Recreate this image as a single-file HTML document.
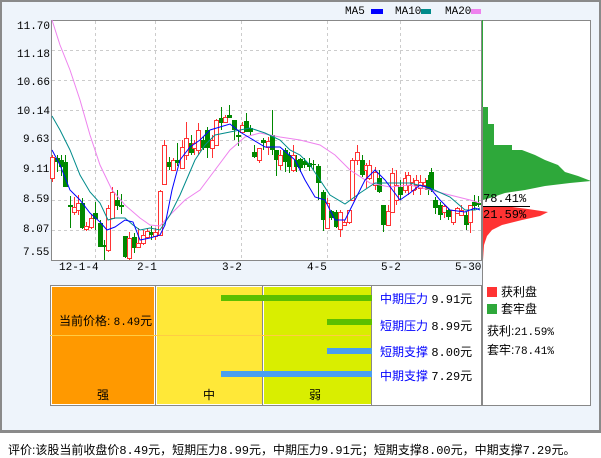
<!DOCTYPE html>
<html><head><meta charset="utf-8"><style>
body{margin:0;width:601px;height:456px;background:#fff;position:relative;font-family:"Liberation Sans","WenQuanYi Zen Hei",sans-serif;font-size:12px;overflow:hidden}
.a{position:absolute}
#frame{left:0;top:0;width:597px;height:428px;background:#eef4fb;border:2px solid #8a8a8a;border-bottom-width:3px}
.t{position:absolute;white-space:nowrap;line-height:14px}
.mono{font-family:"Liberation Mono","WenQuanYi Zen Hei",monospace;font-size:12px}
.ax{font-family:"Liberation Mono",monospace;font-size:11px}
</style></head><body>
<div class="a" id="frame"></div>
<svg class="a" style="left:0;top:0" width="601" height="456" xmlns="http://www.w3.org/2000/svg">
<rect x="51.5" y="20.5" width="430" height="240" fill="#fff" stroke="#888"/>
<rect x="482.5" y="20.5" width="108" height="385" fill="#fff" stroke="#888"/>
<g stroke="#ccc" stroke-dasharray="3,3" stroke-width="1">
<line x1="52" y1="50.5" x2="481" y2="50.5"/><line x1="52" y1="80.5" x2="481" y2="80.5"/><line x1="52" y1="110.5" x2="481" y2="110.5"/><line x1="52" y1="140.5" x2="481" y2="140.5"/><line x1="52" y1="170.5" x2="481" y2="170.5"/><line x1="52" y1="200.5" x2="481" y2="200.5"/><line x1="52" y1="230.5" x2="481" y2="230.5"/>
<line x1="95.5" y1="21" x2="95.5" y2="260"/><line x1="155.5" y1="21" x2="155.5" y2="260"/><line x1="241.5" y1="21" x2="241.5" y2="260"/><line x1="327.5" y1="21" x2="327.5" y2="260"/><line x1="400.5" y1="21" x2="400.5" y2="260"/>
</g>
<g id="cd"></g>
<polyline fill="none" stroke="#ee82ee" points="52,20 60,45 70,70 80,100 90,135 100,165 112,190 125,205 140,218 150,225 160,226 170,215 185,200 200,190 215,170 230,150 245,137 260,133 280,137 300,140 320,145 335,155 350,170 370,183 390,187 410,185 430,190 450,195 470,200 480,203"/>
<polyline fill="none" stroke="#008b8b" points="52,116 60,130 70,150 80,175 90,192 100,203 108,220 115,218 125,218 133,225 140,230 150,228 160,230 170,215 180,195 195,160 205,145 215,135 230,132 250,128 265,133 280,140 290,150 300,155 310,165 320,180 330,195 345,204 360,193 375,183 390,183 410,183 430,188 450,197 465,210 475,210 480,208"/>
<polyline fill="none" stroke="#0000ff" points="52,150 60,165 70,190 80,200 90,213 100,222 107,230 115,227 125,220 133,222 140,240 150,238 160,235 165,225 172,190 180,160 190,147 200,140 210,130 220,127 230,124 240,132 250,138 265,147 280,147 295,160 305,180 315,197 325,200 335,220 345,220 355,200 365,180 375,170 385,180 400,200 410,193 420,185 430,188 440,200 450,210 465,212 475,208 480,210"/>
<line x1="482.5" y1="20" x2="482.5" y2="107" stroke="#2ea83a"/>
<polygon fill="#2ea83a" points="483,107 488,107 488,124 494,124 494,145 512,145 512,150 522,150 535,155 545,160 558,165 565,172 578,176 591,181 570,183 545,186 525,190 505,193 490,198 483,200"/>
<polygon fill="#ff3333" points="483,207 512,207 528,209 548,212 540,216 522,220 502,225 492,230 487,236 484,245 483,260"/>
<line x1="483" y1="206.5" x2="530" y2="206.5" stroke="#000"/>
<rect x="50.5" y="285.5" width="431" height="120" fill="#fff" stroke="#888"/>
<rect x="52" y="287" width="102" height="117" fill="#ff9900"/>
<rect x="157" y="287" width="105" height="117" fill="#ffe838"/>
<rect x="264" y="287" width="107" height="117" fill="#d9ee00"/>
<line x1="155.5" y1="286" x2="155.5" y2="405" stroke="#888"/><line x1="262.5" y1="286" x2="262.5" y2="405" stroke="#888"/><line x1="371.5" y1="286" x2="371.5" y2="405" stroke="#888"/>
<line x1="50" y1="335.5" x2="370" y2="335.5" stroke="#ffcc44"/>
<rect x="221" y="295" width="151" height="6" fill="#5cbf00"/>
<rect x="327" y="319" width="45" height="6" fill="#5cbf00"/>
<rect x="327" y="348" width="45" height="6" fill="#4a9ef0"/>
<rect x="221" y="371" width="151" height="6" fill="#4a9ef0"/>
<rect x="371" y="9" width="12" height="5" fill="#0000ff"/><rect x="421" y="9" width="10" height="5" fill="#008b8b"/><rect x="471" y="9" width="10" height="5" fill="#ee82ee"/>
<rect x="487" y="287" width="10" height="10" fill="#ff3333"/><rect x="487" y="304" width="10" height="10" fill="#2ea83a"/>
</svg>
<div class="t ax" style="left:345px;top:5px">MA5</div>
<div class="t ax" style="left:395px;top:5px">MA10</div>
<div class="t ax" style="left:445px;top:5px">MA20</div>
<div class="t ax" style="left:17px;top:20px">11.70</div>
<div class="t ax" style="left:17px;top:48px">11.18</div>
<div class="t ax" style="left:17px;top:76px">10.66</div>
<div class="t ax" style="left:17px;top:105px">10.14</div>
<div class="t ax" style="left:23px;top:133px">9.63</div>
<div class="t ax" style="left:23px;top:163px">9.11</div>
<div class="t ax" style="left:23px;top:193px">8.59</div>
<div class="t ax" style="left:23px;top:223px">8.07</div>
<div class="t ax" style="left:23px;top:246px">7.55</div>
<div class="t ax" style="left:59px;top:261px">12-1-4</div>
<div class="t ax" style="left:137px;top:261px">2-1</div>
<div class="t ax" style="left:222px;top:261px">3-2</div>
<div class="t ax" style="left:307px;top:261px">4-5</div>
<div class="t ax" style="left:381px;top:261px">5-2</div>
<div class="t ax" style="left:455px;top:261px">5-30</div>
<div class="t mono" style="left:483px;top:192px">78.41%</div>
<div class="t mono" style="left:483px;top:208px">21.59%</div>
<div class="t" style="left:59px;top:314px">当前价格: <span class="ax">8.49</span>元</div>
<div class="t" style="left:97px;top:388px">强</div>
<div class="t" style="left:203px;top:388px">中</div>
<div class="t" style="left:309px;top:388px">弱</div>
<div class="t" style="left:380px;top:292px"><span style="color:#0000ff">中期压力</span> <span class="mono">9.91</span>元</div>
<div class="t" style="left:380px;top:319px"><span style="color:#0000ff">短期压力</span> <span class="mono">8.99</span>元</div>
<div class="t" style="left:380px;top:345px"><span style="color:#0000ff">短期支撑</span> <span class="mono">8.00</span>元</div>
<div class="t" style="left:380px;top:369px"><span style="color:#0000ff">中期支撑</span> <span class="mono">7.29</span>元</div>
<div class="t" style="left:501px;top:285px">获利盘</div>
<div class="t" style="left:501px;top:302px">套牢盘</div>
<div class="t" style="left:487px;top:324px">获利:<span class="ax">21.59%</span></div>
<div class="t" style="left:487px;top:343px">套牢:<span class="ax">78.41%</span></div>
<div class="t" style="left:8px;top:443px">评价:该股当前收盘价<span class="mono">8.49</span>元，短期压力<span class="mono">8.99</span>元，中期压力<span class="mono">9.91</span>元；短期支撑<span class="mono">8.00</span>元，中期支撑<span class="mono">7.29</span>元。</div>
<script>
var d=[[52,'r',157,178,155,182],[57,'g',158,162,155,172],[61,'g',160,167,155,176],[65,'g',162,187,155,187],[70,'g',205,207,196,228],[74,'r',207,212,197,215],[78,'r',203,210,195,215],[82,'g',203,228,198,229],[86,'r',226,229,222,231],[91,'r',218,227,214,229],[95,'g',213,219,202,230],[100,'g',223,247,220,247],[104,'g',245,247,240,260],[108,'r',208,250,205,252],[112,'r',192,218,187,218],[117,'g',200,206,190,210],[121,'g',205,207,194,214],[125,'g',236,257,236,258],[129,'r',238,258,232,260],[134,'g',237,248,233,253],[138,'r',243,247,228,247],[143,'r',235,243,230,245],[147,'r',231,237,228,238],[151,'g',232,235,226,240],[155,'r',232,236,228,240],[160,'r',191,235,190,235],[164,'r',145,184,140,184],[169,'g',162,167,157,170],[173,'r',160,170,158,170],[177,'g',160,163,143,166],[182,'r',147,168,140,168],[186,'r',138,155,122,160],[191,'g',143,153,135,155],[194,'r',143,148,140,155],[198,'r',130,150,123,155],[203,'g',140,148,137,150],[207,'g',130,148,127,158],[212,'r',140,148,135,158],[216,'r',120,145,119,145],[221,'g',118,123,107,130],[225,'r',117,122,115,122],[229,'g',115,118,105,118],[234,'g',120,130,120,140],[238,'g',135,137,130,146],[242,'r',125,132,122,132],[246,'g',121,132,113,132],[250,'g',128,132,125,135],[254,'g',152,157,145,158],[259,'r',148,160,148,163],[263,'g',140,143,138,150],[268,'r',141,147,137,155],[272,'g',135,150,110,155],[276,'g',150,160,150,176],[280,'r',155,165,150,170],[285,'g',150,162,148,172],[289,'g',155,167,152,173],[293,'r',155,170,145,172],[296,'g',160,167,155,172],[300,'g',159,168,158,172],[304,'g',161,165,158,168],[309,'g',163,167,158,171],[313,'g',164,165,160,170],[318,'g',166,183,164,200],[323,'g',192,220,190,231],[327,'r',203,228,198,228],[331,'g',211,218,210,220],[336,'g',212,227,210,228],[340,'r',212,229,210,237],[344,'r',222,225,220,225],[349,'r',210,222,210,224],[352,'r',160,200,158,200],[357,'r',152,160,145,165],[362,'g',160,175,155,177],[366,'r',165,170,163,188],[369,'r',165,178,160,180],[375,'r',172,185,167,190],[379,'g',178,192,170,193],[383,'g',205,225,205,232],[388,'r',211,225,205,225],[392,'r',173,212,168,212],[396,'r',185,200,170,205],[400,'g',187,195,180,200],[405,'r',178,190,172,193],[408,'r',175,185,172,195],[413,'r',182,190,178,195],[416,'r',180,185,175,190],[420,'r',182,188,175,195],[425,'r',182,185,178,190],[428,'g',180,190,175,195],[431,'g',172,190,168,192],[435,'g',200,208,197,214],[440,'g',205,215,202,220],[444,'r',206,212,205,218],[448,'g',210,217,208,220],[453,'r',210,222,210,225],[457,'r',208,213,207,214],[461,'r',210,215,205,216],[466,'g',215,225,212,230],[470,'r',205,222,205,233],[474,'g',202,206,195,210],[478,'g',203,205,196,207]];
var s='';d.forEach(function(c){var x=c[0],col=c[1]=='r'?'#ff3333':'#008800';
s+='<line x1="'+(x+.5)+'" y1="'+c[4]+'" x2="'+(x+.5)+'" y2="'+c[5]+'" stroke="'+col+'"/>';
var h=Math.max(1,c[3]-c[2]);
if(c[1]=='r')s+='<rect x="'+(x-1.5)+'" y="'+(c[2]+.5)+'" width="4" height="'+h+'" fill="#fff" stroke="'+col+'"/>';
else s+='<rect x="'+(x-2)+'" y="'+c[2]+'" width="5" height="'+h+'" fill="'+col+'"/>';});
document.getElementById('cd').innerHTML=s;
</script>
</body></html>
